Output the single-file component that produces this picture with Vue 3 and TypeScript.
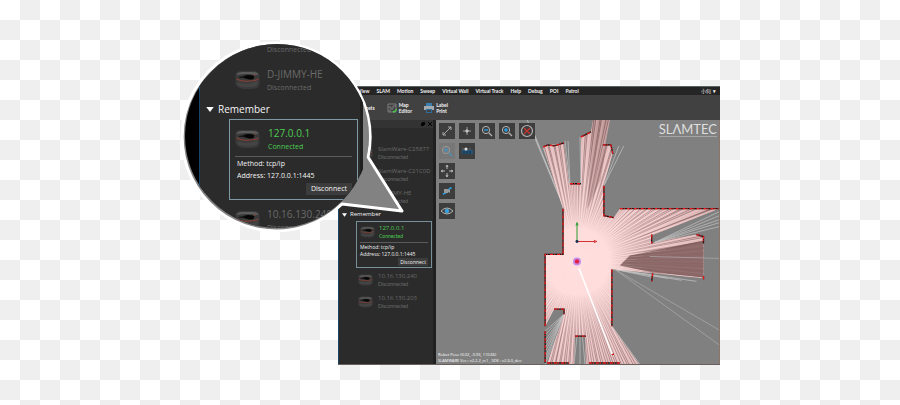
<script setup lang="ts">
type Device = { name: string; status: string }
type Tool = { id: string; label: string; disabled?: boolean }

const menus: string[] = ['View', 'SLAM', 'Motion', 'Sweep', 'Virtual Wall', 'Virtual Track', 'Help', 'Debug', 'POI', 'Patrol']
const found: Device[] = [
  { name: 'SlamWare-C25877', status: 'Disconnected' },
  { name: 'SlamWare-C21C0D', status: 'Disconnected' },
  { name: 'D-JIMMY-HE', status: 'Disconnected' },
]
const remembered: Device[] = [
  { name: '10.16.130.240', status: 'Disconnected' },
  { name: '10.16.130.203', status: 'Disconnected' },
]
const toolRows: Tool[][] = [
  [
    { id: 'expand', label: 'Fit view' },
    { id: 'center', label: 'Center' },
    { id: 'minus', label: 'Zoom out' },
    { id: 'plus', label: 'Zoom in' },
    { id: 'cancel', label: 'Cancel' },
  ],
  [
    { id: 'find', label: 'Find robot', disabled: true },
    { id: 'record', label: 'Record' },
  ],
  [{ id: 'move', label: 'Move' }],
  [{ id: 'track', label: 'Track' }],
  [{ id: 'eye', label: 'Visibility' }],
]

const area =
  '128,135 128,89 108,27 113,25 129,23 134,64 146,64 146,17 156,12 158,0 175,0 170,26 176,25 178,33 169,65 169,96 179,98 185,89 285,89 217,116 217,124 238,119 262,115 269,117 269,159 218,154 180,150 177,150 177,207 204,245 151,245 150,217 140,217 139,245 112,245 129,195 129,190 119,190 110,207 110,135'

// Laser rays fan out from the robot at (142, 142).
const noise = (n: number): number => {
  const v = Math.sin(n * 127.1) * 43758.5453
  return v - Math.floor(v)
}
const rays = Array.from({ length: 420 }, (_, i) => {
  const a = ((i + noise(i) * 0.9) / 420) * Math.PI * 2
  return { x: Math.round(142 + Math.cos(a) * 230), y: Math.round(142 + Math.sin(a) * 230), light: i % 3 === 0 }
})

const fan = (x1: number, y1: number, x2: number, y2: number, n: number, ox: number, oy: number): string =>
  Array.from({ length: n }, (_, i) => {
    const t = n === 1 ? 0 : i / (n - 1)
    return `M${ox} ${oy}L${Math.round(x1 + (x2 - x1) * t)} ${Math.round(y1 + (y2 - y1) * t)}`
  }).join('')
const looseRays: string = [
  fan(92, 0, 99, 14, 3, 128, 86),
  fan(108, 28, 113, 26, 4, 130, 88),
  fan(130, 21, 133, 21, 2, 135, 66),
  fan(145, 17, 149, 15, 3, 146, 64),
  fan(184, 26, 189, 26, 2, 169, 66),
  fan(285, 92, 285, 107, 5, 220, 123),
  fan(218, 158, 262, 162, 4, 180, 150),
  fan(110, 212, 110, 242, 8, 129, 195),
  fan(110, 245, 120, 245, 5, 129, 200),
  fan(139, 245, 150, 245, 3, 145, 190),
  fan(190, 245, 205, 245, 6, 177, 207),
].join('')
const walls =
  'M110 207V135H128V89M108 27L113 25L119 26L129 23M135 64H146M146 17L156 12M168 25H176L178 34M169 66V96L179 98M185 89H284M217 115V124M262 115L269 117V124M269 157V160M218 154L217 162M177 150V207M119 190H129V195M140 217H151M110 212V244M177 236L179 235M112 244H134M154 244H185'
</script>

<template>
  <main class="page">
    <svg class="defs" aria-hidden="true">
      <symbol id="robot" viewBox="0 0 24 20">
        <path d="M0 5Q0 1 6 1H18Q24 1 24 6V14Q23 19 16 19H8Q1 18 0 14Z" fill="#3a3a3a" />
        <path d="M2 12Q12 16 22 11V14Q21 17 16 17H8Q3 17 2 14Z" fill="#444" />
        <path d="M1 5Q2 2 7 2H17Q22 2 23 5Q17 4 12 4Q6 4 1 5Z" fill="#5c5c5c" />
        <path d="M8 6Q13 4 19 6L18 9Q15 10 12 9L8 8Z" fill="#060606" />
        <path d="M3 7L9 6V8L4 8Z" fill="#151515" />
        <path d="M1 9Q7 12 14 11Q20 11 23 9" fill="none" stroke="#8a4035" stroke-width="1.2" />
        <circle cx="19" cy="5" r=".8" fill="#9a5040" />
      </symbol>
    </svg>

    <section class="window">
      <nav class="menubar">
        <button v-for="m in menus" :key="m" class="menu">{{ m }}</button>
        <span class="user">小何</span>
        <button class="menu caret" aria-label="Account menu">▾</button>
      </nav>

      <div class="toolbar">
        <button class="action">
          <svg class="action-icon" viewBox="0 0 10 10" aria-hidden="true"><path d="M2 2H8V8H2Z" fill="none" stroke="#999" /></svg>
          <span>Widgets</span>
        </button>
        <button class="action">
          <svg class="action-icon" viewBox="0 0 10 10" aria-hidden="true">
            <path d="M1 1H9V9H1ZM1 4H4V6H6V3H9M3 9V6" fill="none" stroke="#8a8a8a" stroke-width=".8" />
            <path d="M6 8L7 9L10 6" fill="none" stroke="#45c545" stroke-width="1.3" />
          </svg>
          <span>Map<br />Editor</span>
        </button>
        <button class="action">
          <svg class="action-icon" viewBox="0 0 10 10" aria-hidden="true">
            <path d="M2 0H8V4H2Z" fill="#3a7fae" /><path d="M0 3H10V7H0Z" fill="#a3abb0" />
            <path d="M2 6H8V10H2Z" fill="#2d6c9b" /><path d="M3 7H7V9H3Z" fill="#414141" />
          </svg>
          <span>Label<br />Print</span>
        </button>
      </div>

      <div class="body">
        <aside class="panel">
          <div class="panel-head">
            <button class="dock" aria-label="Float panel"><svg viewBox="0 0 4 4"><path d="M1 0H4V3H3V4H0V1H1Z" fill="#050505" /></svg></button>
            <button class="dock" aria-label="Close panel"><svg viewBox="0 0 4 4"><path d="M0 0L4 4M4 0L0 4" stroke="#050505" /></svg></button>
          </div>
          <ul class="devices">
            <li v-for="d in found" :key="d.name" class="device">
              <svg class="robot"><use href="#robot" /></svg>
              <div><p class="name">{{ d.name }}</p><p class="status">{{ d.status }}</p></div>
            </li>
          </ul>
          <h2 class="group"><svg class="tri" viewBox="0 0 6 4"><path d="M0 0H6L3 4Z" fill="#fff" /></svg>Remember</h2>
          <article class="card">
            <div class="device on">
              <svg class="robot"><use href="#robot" /></svg>
              <div><p class="name">127.0.0.1</p><p class="status">Connected</p></div>
            </div>
            <div class="info"><p>Method: tcp/ip</p><p>Address: 127.0.0.1:1445</p></div>
            <button class="disconnect">Disconnect</button>
          </article>
          <ul class="devices">
            <li v-for="d in remembered" :key="d.name" class="device">
              <svg class="robot"><use href="#robot" /></svg>
              <div><p class="name">{{ d.name }}</p><p class="status">{{ d.status }}</p></div>
            </li>
          </ul>
        </aside>

        <div class="map">
          <svg class="scan" viewBox="0 0 285 245" preserveAspectRatio="xMidYMid slice" aria-label="Laser scan map">
            <defs>
              <clipPath id="area"><polygon :points="area" /></clipPath>
              <radialGradient id="ray" gradientUnits="userSpaceOnUse" cx="142" cy="142" r="150">
                <stop offset=".22" stop-color="#7a5656" stop-opacity="0" />
                <stop offset=".5" stop-color="#7a5656" stop-opacity=".5" />
                <stop offset="1" stop-color="#6a4c4c" stop-opacity=".8" />
              </radialGradient>
              <radialGradient id="glow" gradientUnits="userSpaceOnUse" cx="142" cy="142" r="150">
                <stop offset=".3" stop-color="#ffdcdc" /><stop offset="1" stop-color="#d9b0b0" />
              </radialGradient>
            </defs>
            <path :d="looseRays" fill="none" stroke="#c4c4c4" stroke-width=".7" />
            <polygon :points="area" fill="url(#glow)" />
            <g clip-path="url(#area)">
              <path d="M158 0H175L166 60L152 90Z" fill="#a87d7d" opacity=".5" />
              <path d="M195 136L230 129L269 121V158L218 153L185 146Z" fill="#8d6a6a" />
              <line
                v-for="(r, i) in rays" :key="i" x1="142" y1="142" :x2="r.x" :y2="r.y"
                :stroke="r.light ? '#ffe4e4' : 'url(#ray)'" :stroke-width="r.light ? 0.4 : 0.8"
                :stroke-opacity="r.light ? 0.5 : 1"
              />
              <path d="M208 136L240 129L269 122V158L225 152L195 145Z" fill="#8d6a6a" opacity=".75" />
            </g>
            <path d="M180 150L285 211M180 150L285 226M215 137L285 139" fill="none" stroke="#b0aaaa" stroke-width=".7" />
            <path d="M144 149L178 237" stroke="#fff" stroke-width="1.5" />
            <path :d="walls" fill="none" stroke="#151515" stroke-width="1.3" />
            <path :d="walls" fill="none" stroke="#f01818" stroke-width="1.3" stroke-dasharray="3 1 1 2" />
            <path d="M142 122V104M141 106L142 103L143 106" fill="none" stroke="#2c9a2c" />
            <path d="M142 122H160M159 121L162 122L159 123" fill="none" stroke="#d33030" />
            <circle cx="142" cy="122" r="1.5" fill="#162c50" />
            <circle cx="142" cy="142" r="4" fill="#c78bea" /><circle cx="142" cy="142" r="2.2" fill="#e21f45" />
          </svg>

          <div class="tools">
            <div v-for="(row, ri) in toolRows" :key="ri" class="tool-row">
              <button v-for="t in row" :key="t.id" class="tool" :class="{ faded: t.disabled }" :aria-label="t.label">
                <svg viewBox="0 0 16 16" fill="none" stroke="#b4b4b4">
                  <path v-if="t.id === 'expand'" d="M4 12L12 4M9 4H12V7M4 9V12H7" stroke-width=".9" />
                  <template v-else-if="t.id === 'center'">
                    <path d="M8 4V12M4 8H12" stroke-width=".8" /><path d="M8 6L10 8L8 10L6 8Z" fill="#c4c4c4" stroke="none" />
                  </template>
                  <template v-else-if="t.id === 'minus' || t.id === 'plus' || t.id === 'find'">
                    <circle cx="7" cy="7" r="3.6" /><path d="M10 10L13 13" :stroke="t.id === 'find' ? '#2aa5ee' : '#b4b4b4'" stroke-width="1.2" />
                    <path d="M5 7H9" stroke="#29a5ed" stroke-width="1.3" />
                    <path v-if="t.id !== 'minus'" d="M7 5V9" stroke="#29a5ed" stroke-width="1.3" />
                  </template>
                  <template v-else-if="t.id === 'cancel'">
                    <circle cx="8" cy="8" r="5.5" stroke-width="1.2" /><path d="M5 5L11 11M11 5L5 11" stroke="#c8342c" stroke-width="1.2" />
                  </template>
                  <template v-else-if="t.id === 'record'">
                    <path d="M3 7H14V11H3Z" fill="#235478" stroke="none" /><circle cx="7" cy="6" r="1.6" fill="#ddd" stroke="none" />
                    <path d="M3 6H5M10 6H12" stroke="#666" /><path d="M5 8V11M8 8V11M11 8V11" stroke="#172d40" />
                  </template>
                  <path v-else-if="t.id === 'move'" d="M8 2V6M8 10V14M2 8H6M10 8H14M7 4L8 2L9 4M7 12L8 14L9 12M4 7L2 8L4 9M12 7L14 8L12 9" />
                  <template v-else-if="t.id === 'track'">
                    <path d="M4 11L7 10L10 6L12 5" stroke="#249ae0" stroke-width="1.4" /><path d="M5 6H9V10H5ZM9 7L11 6V10L9 9" fill="#999" stroke="none" />
                    <path d="M4 12L5 10M10 6L12 4V6" stroke="#249ae0" />
                  </template>
                  <template v-else>
                    <path d="M2 8Q8 2 14 8Q8 14 2 8Z" /><circle cx="8" cy="8" r="1.9" fill="#27a0e6" stroke="#62b9e8" stroke-width=".6" />
                  </template>
                </svg>
              </button>
            </div>
          </div>
          <p class="brand">SLΛMTEC</p>
          <p class="pose">Robot Pose (0.02, -0.93, 110.66)<br />SLAMWARE Ver.: v2.2.2_rc1 , SDK : v2.6.0_dev</p>
        </div>
      </div>
    </section>

    <section class="callout">
      <svg class="bubble" viewBox="0 0 228 196" aria-hidden="true">
        <path d="M188 117L222 171L162 164A94 94 0 1 1 188 117Z" fill="#828282" stroke="#fff" stroke-width="3" stroke-linejoin="round" />
      </svg>
      <div class="lens">
        <div class="lens-panel">
          <p class="status first">Disconnected</p>
          <div class="device">
            <svg class="robot"><use href="#robot" /></svg>
            <div><p class="name">D-JIMMY-HE</p><p class="status">Disconnected</p></div>
          </div>
          <h2 class="group"><svg class="tri" viewBox="0 0 6 4"><path d="M0 0H6L3 4Z" fill="#fff" /></svg>Remember</h2>
          <article class="card">
            <div class="device on">
              <svg class="robot"><use href="#robot" /></svg>
              <div><p class="name">127.0.0.1</p><p class="status">Connected</p></div>
            </div>
            <div class="info"><p>Method: tcp/ip</p><p>Address: 127.0.0.1:1445</p></div>
            <button class="disconnect">Disconnect</button>
          </article>
          <div class="device last">
            <svg class="robot"><use href="#robot" /></svg>
            <div><p class="name">10.16.130.240</p><p class="status">Disconnected</p></div>
          </div>
        </div>
      </div>
    </section>
  </main>
</template>

<style>
body { margin: 0; }
</style>

<style scoped>
* { box-sizing: border-box; }
p, h2, ul { margin: 0; padding: 0; list-style: none; }
button { margin: 0; padding: 0; border: 0; background: none; color: inherit; font: inherit; }
svg { display: block; }
.defs { position: absolute; width: 0; height: 0; }

.page {
  position: relative;
  display: flex;
  min-height: 100vh;
  padding: 86px 180px 40px 338px;
  background: repeating-conic-gradient(#efefef 0 25%, #fff 0 50%) 0 0 / 40px 40px;
  font-family: "Open Sans", "Noto Sans", "Noto Sans CJK SC", sans-serif;
}

.window { flex: 1; min-width: 0; display: flex; flex-direction: column; background: #414141; color: #f2f2f2; border-top: 1px solid #596263; font-size: 5px; line-height: 6px; }
.menubar { display: flex; align-items: center; gap: 7px; height: 8px; padding: 0 4px 0 20px; background: #252525; font-family: Lato, "Noto Sans CJK SC", sans-serif; font-weight: 700; white-space: nowrap; }
.user { margin-left: auto; font-weight: 400; }
.caret { margin-left: -5px; }
.toolbar { display: flex; align-items: center; gap: 12px; height: 25px; padding-left: 6px; font-family: Lato, sans-serif; font-weight: 700; }
.action { display: flex; align-items: center; gap: 2px; text-align: left; }
.action-icon { width: 10px; height: 10px; }

.body { flex: 1; display: flex; border-bottom: 1px solid #67605c; }
.panel { flex: 0 0 98px; background: #2b2b2b; border-left: 1px solid #1d4463; border-right: 3px solid #202020; }
.panel-head { display: flex; justify-content: flex-end; align-items: center; gap: 3px; height: 8px; padding-right: 1px; background: #333; }
.dock { width: 4px; height: 4px; }
.devices { display: grid; gap: 6px; padding: 17px 0 0 19px; }
.device { display: flex; align-items: center; gap: 5px; height: 16px; color: #6a6a6a; }
.robot { flex: none; width: 15px; height: 12px; }
.name { font-size: 6px; line-height: 9px; white-space: nowrap; }
.status { font-size: 5px; line-height: 7px; }
.panel .status { font-family: Lato, sans-serif; }
.group { display: flex; align-items: center; gap: 3px; height: 9px; margin-top: 5px; padding-left: 3px; color: #f4f4f4; font-size: 6px; line-height: 9px; font-weight: 400; }
.tri { width: 5px; height: 4px; }
.card { display: flex; flex-direction: column; margin: 2px 1px 0 17px; padding: 2px 3px; height: 47px; border: 1px solid #77909a; background: #2b2b2b; }
.panel .card .device { gap: 4px; }
.device.on { color: #4ccc52; }
.info { margin-top: 2px; padding-top: 1px; border-top: 1px solid #5b5b5b; color: #f4f4f4; font-size: 5px; line-height: 7px; white-space: nowrap; }
.disconnect { align-self: flex-end; height: 8px; padding: 0 2px; background: #3c3c3c; color: #f4f4f4; font-size: 5px; line-height: 8px; }
.panel .card + .devices { padding-top: 4px; }

.map { position: relative; flex: 1; min-width: 0; background: #808080; border-right: 1px solid #8b7568; overflow: hidden; }
.scan { position: absolute; inset: 0; width: 100%; height: 100%; }
.tools { position: relative; display: grid; gap: 4px; padding: 3px; }
.tool-row { display: flex; gap: 4px; }
.tool { width: 16px; height: 16px; background: #3d3d3d; }
.tool svg { width: 16px; height: 16px; }
.faded { background: #777; }
.faded svg { opacity: .6; }
.brand { position: absolute; top: 2px; right: 2px; border-bottom: 1px solid #a5a5a5; color: #dedede; font-family: Lato, sans-serif; font-size: 13px; line-height: 14px; }
.pose { position: absolute; left: 2px; bottom: 0; color: #fff; font-size: 4px; line-height: 6px; white-space: nowrap; }

.callout { position: absolute; left: 180px; top: 40px; width: 228px; height: 196px; }
.bubble { position: absolute; inset: 0; width: 228px; height: 196px; overflow: visible; }
.lens { position: absolute; left: 5px; top: 4px; width: 184px; height: 184px; overflow: hidden; border-radius: 50%; padding-left: 14px; background: linear-gradient(90deg, #000 0 20px, #828282 20px); }
.lens-panel { width: 164px; height: 184px; padding: 0 5px 0 6px; background: #2b2b2b; border-left: 1px solid #174669; border-right: 3px solid #202020; }
.callout .device { gap: 7px; height: 31px; margin-left: 29px; }
.callout .robot { width: 25px; height: 20px; }
.callout .name { font-size: 10px; line-height: 16px; }
.callout .status { font-size: 7px; line-height: 12px; }
.callout .first { padding-left: 61px; color: #6a6a6a; }
.callout .first + .device { height: 34px; margin-top: 7px; }
.callout .group { gap: 4px; height: 16px; margin-top: 4px; padding: 0; font-size: 10px; line-height: 16px; }
.callout .tri { width: 8px; height: 5px; }
.callout .card { width: 129px; height: 81px; margin: 2px 0 0 23px; padding: 3px 5px; border-color: #7d9aa4; }
.callout .card .device { gap: 8px; margin-left: 0; }
.callout .info { margin-top: 2px; padding: 1px 0 0 2px; font-size: 7px; line-height: 12px; }
.callout .disconnect { height: 12px; padding: 0 5px; font-size: 7px; line-height: 12px; margin-top: 1px; }
.callout .last { margin-top: 4px; }
</style>
